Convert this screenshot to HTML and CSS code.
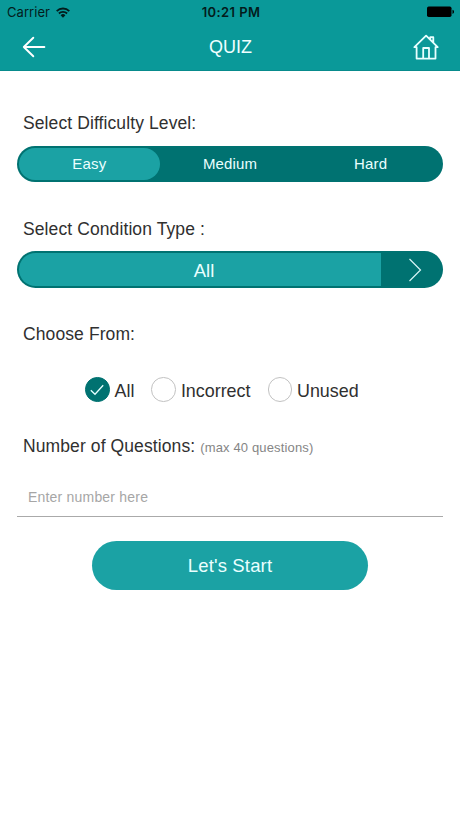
FILE: index.html
```html
<!DOCTYPE html>
<html lang="en">
<head>
<meta charset="utf-8">
<title>Quiz</title>
<link rel="stylesheet" href="styles.css">
</head>
<body>
<header class="header">
  <div class="status">
    <div class="carrier"><span class="carrier-name">Carrier</span>
      <svg class="wifi" width="14" height="11" viewBox="0 0 14 11" fill="none" stroke="#031c1c" stroke-width="1.8"><path d="M.7 4.1a8.9 8.9 0 0 1 12.6 0M2.9 6.5a5.8 5.8 0 0 1 8.2 0"/><path d="M7 10.7 4.6 8.3a3.4 3.4 0 0 1 4.8 0z" fill="#031c1c" stroke="none"/></svg>
    </div>
    <span class="time">10:21 PM</span>
    <svg class="battery" width="28" height="12" viewBox="0 0 28 12"><rect x="0" y="0.5" width="24.5" height="10.5" rx="1.7"/><path d="M25.5 3.7c2 .6 2 3.6 0 4.2z"/></svg>
  </div>
  <nav class="nav">
    <svg class="back" width="24" height="22" viewBox="0 0 24 22" fill="none" stroke="#fff" stroke-width="1.9" stroke-linecap="round" stroke-linejoin="round"><path d="M11.3 1.7 1.8 11l9.5 9.3M1.8 11h20.6"/></svg>
    <h1 class="title">QUIZ</h1>
    <svg class="home" width="26" height="26" viewBox="0 0 26 26" fill="none" stroke="#e8ffff" stroke-width="1.8" stroke-linejoin="round"><path d="M3.6 13.2H1.4L13.1 1.6l11.6 11.6h-2.2v11.4H3.6zM17.3 5.6V3.2h3v5.4M10.2 24.6V14H16v10.6"/></svg>
  </nav>
</header>
<main class="form">
  <h2 class="label">Select Difficulty Level:</h2>
  <div class="pill levels">
    <button class="level selected">Easy</button>
    <button class="level">Medium</button>
    <button class="level">Hard</button>
  </div>
  <h2 class="label condition-label">Select Condition Type :</h2>
  <div class="pill condition">
    <span class="condition-value">All</span>
    <span class="condition-next"><svg width="14" height="24" viewBox="0 0 14 24" fill="none" stroke="#d8f6f6" stroke-width="1.2"><path d="m1.5 1 11 11-11 11"/></svg></span>
  </div>
  <h2 class="label">Choose From:</h2>
  <div class="choices">
    <div class="choice"><span class="radio checked"><svg width="14" height="12" viewBox="0 0 14 12" fill="none" stroke="#e4ffff" stroke-width="1.3"><path d="m.8 6.3 4.2 4 8.2-9"/></svg></span><span class="choice-text">All</span></div>
    <div class="choice"><span class="radio"></span><span class="choice-text">Incorrect</span></div>
    <div class="choice"><span class="radio"></span><span class="choice-text">Unused</span></div>
  </div>
  <h2 class="label count">Number of Questions: <small class="hint">(max 40 questions)</small></h2>
  <input class="number" type="text" placeholder="Enter number here">
  <button class="start">Let's Start</button>
</main>
</body>
</html>
```

FILE: styles.css
```css
* { box-sizing: border-box; }
body {
  margin: 0;
  min-height: 818px;
  background: #fff;
  color: #303030;
  font-family: "Liberation Sans", Arial, sans-serif;
}
button { border: 0; padding: 0; font: inherit; color: inherit; }
svg { display: block; }
.header { height: 71px; background: #0a9999; border-bottom: 1px solid #088b8c; }
.status {
  display: grid;
  grid-template-columns: 1fr auto 1fr;
  align-items: center;
  height: 24px;
  padding: 0 5px 0 7px;
  font-family: Inter, sans-serif;
  font-size: 13px;
  color: #031c1c;
}
.carrier { display: flex; align-items: center; gap: 6px; }
.carrier-name { letter-spacing: 0.05px; }
.time { font-weight: 600; letter-spacing: 0.4px; }
.battery { justify-self: end; fill: #000; }
.nav {
  display: grid;
  grid-template-columns: 1fr auto 1fr;
  align-items: center;
  height: 46px;
  padding: 0 21px 0 22px;
}
.title { margin: 0; padding-top: 1px; font-size: 18px; font-weight: 400; color: #f0ffff; }
.home { justify-self: end; }
.form { display: flex; flex-direction: column; padding: 40px 17px 0; }
.label {
  margin: 0 0 11px 6px;
  font-size: 17.5px;
  font-weight: 400;
  line-height: 24px;
  letter-spacing: 0.1px;
  white-space: nowrap;
}
.condition-label { margin-bottom: 10px; }
.pill {
  display: flex;
  height: 37px;
  padding: 2px;
  border-radius: 19px;
  background: #007271;
  color: #eaffff;
  overflow: hidden;
}
.levels { height: 36px; margin-bottom: 35px; }
.condition { margin-bottom: 34px; }
.level { flex: 1; border-radius: 17px; background: transparent; font-size: 15px; line-height: 32px; letter-spacing: 0.15px; }
.selected { background: #1ba2a4; }
.condition-value {
  flex: 1;
  padding-left: 8px;
  border-radius: 17px 0 0 17px;
  background: #1ba2a4;
  font-size: 18.5px;
  line-height: 35px;
  text-align: center;
}
.condition-next { display: flex; align-items: center; justify-content: center; width: 60px; padding-left: 8px; }
.choices { display: flex; gap: 17px; height: 25px; margin: 20px 0 32px 68px; }
.choice { display: flex; align-items: center; gap: 5px; }
.radio { display: flex; align-items: center; justify-content: center; width: 24.5px; height: 24.5px; border: 1px solid #c2c2c2; border-radius: 50%; }
.checked { border-color: #007271; background: #007271; }
.choice-text { font-size: 17.9px; line-height: 25px; padding-top: 4px; }
.count { margin-bottom: 19px; }
.hint { font-size: 13px; letter-spacing: 0.15px; color: #858585; }
.number {
  height: 38px;
  padding: 0 11px 1px;
  border: 0;
  border-bottom: 1px solid #aaa;
  border-radius: 0;
  background: transparent;
  font-family: inherit;
  font-size: 14px;
  letter-spacing: 0.2px;
  outline: 0;
}
.number::placeholder { color: #a6a6a6; opacity: 1; }
.start {
  width: 276px;
  height: 49px;
  margin: 24px auto 0;
  border-radius: 25px;
  background: #1ba2a4;
  color: #eaffff;
  font-size: 18.5px;
  letter-spacing: 0.15px;
}
```
